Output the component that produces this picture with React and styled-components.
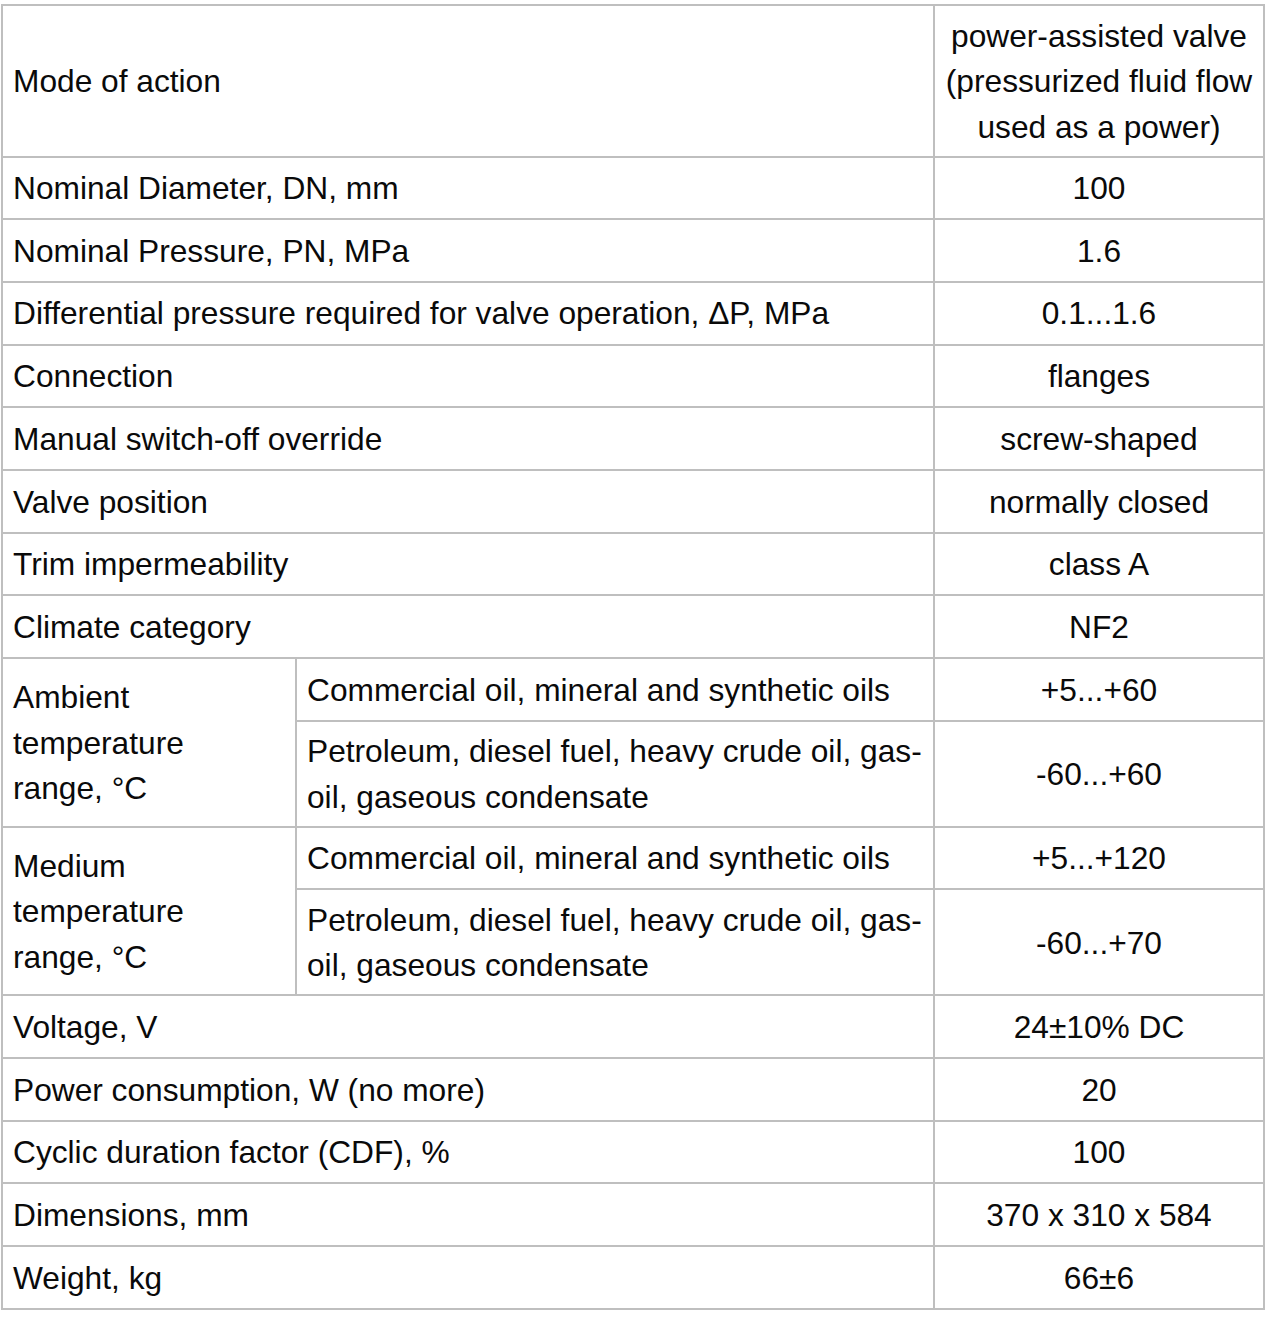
import React from 'react';
import styled, { createGlobalStyle } from 'styled-components';

const GlobalStyle = createGlobalStyle`
  body {
    margin: 0;
    background: #fff;
  }
`;

const Sheet = styled.div`
  display: grid;
  grid-template-columns: 294px 638px 330px;
  width: max-content;
  margin: 4px 0 0 1px;
  border-top: 2px solid #bfbfbf;
  border-left: 2px solid #bfbfbf;
  font-family: 'Liberation Sans', Arial, sans-serif;
  font-size: 31.7px;
  line-height: 45.5px;
  color: #0a0a0a;
`;

const Cell = styled.div`
  box-sizing: border-box;
  min-height: 62.7px;
  display: flex;
  align-items: center;
  justify-content: ${props => props.center ? 'center' : 'flex-start'};
  text-align: ${props => props.center ? 'center' : 'left'};
  grid-column: ${props => props.wide ? 'span 2' : 'auto'};
  grid-row: ${props => props.rows ? `span ${props.rows}` : 'auto'};
  padding: 7.5px 10px 5.5px;
  border-right: 2px solid #bfbfbf;
  border-bottom: 2px solid #bfbfbf;
  white-space: nowrap;
`;

const simpleRows = [
  ['Nominal Diameter, DN, mm', '100'],
  ['Nominal Pressure, PN, MPa', '1.6'],
  ['Differential pressure required for valve operation, ΔP, MPa', '0.1...1.6'],
  ['Connection', 'flanges'],
  ['Manual switch-off override', 'screw-shaped'],
  ['Valve position', 'normally closed'],
  ['Trim impermeability', 'class A'],
  ['Climate category', 'NF2'],
];

const tailRows = [
  ['Voltage, V', '24±10% DC'],
  ['Power consumption, W (no more)', '20'],
  ['Cyclic duration factor (CDF), %', '100'],
  ['Dimensions, mm', '370 x 310 x 584'],
  ['Weight, kg', '66±6'],
];

const groups = [
  { title: ['Ambient', 'temperature', 'range, °C'], values: ['+5...+60', '-60...+60'] },
  { title: ['Medium', 'temperature', 'range, °C'], values: ['+5...+120', '-60...+70'] },
];

const Lines = ({ items }) => (
  <span>
    {items.map((t, i) => (
      <React.Fragment key={i}>
        {i > 0 && <br />}
        {t}
      </React.Fragment>
    ))}
  </span>
);

const SimpleRow = ({ label, value }) => (
  <>
    <Cell wide>{label}</Cell>
    <Cell center>{value}</Cell>
  </>
);

export default function App() {
  return (
    <>
      <GlobalStyle />
      <Sheet>
        <Cell wide>Mode of action</Cell>
        <Cell center>
          <Lines items={['power-assisted valve', '(pressurized fluid flow', 'used as a power)']} />
        </Cell>

        {simpleRows.map(([l, v]) => <SimpleRow key={l} label={l} value={v} />)}

        {groups.map(g => (
          <React.Fragment key={g.title[0]}>
            <Cell rows={2}><Lines items={g.title} /></Cell>
            <Cell>Commercial oil, mineral and synthetic oils</Cell>
            <Cell center>{g.values[0]}</Cell>
            <Cell>
              <Lines items={['Petroleum, diesel fuel, heavy crude oil, gas-', 'oil, gaseous condensate']} />
            </Cell>
            <Cell center>{g.values[1]}</Cell>
          </React.Fragment>
        ))}

        {tailRows.map(([l, v]) => <SimpleRow key={l} label={l} value={v} />)}
      </Sheet>
    </>
  );
}
